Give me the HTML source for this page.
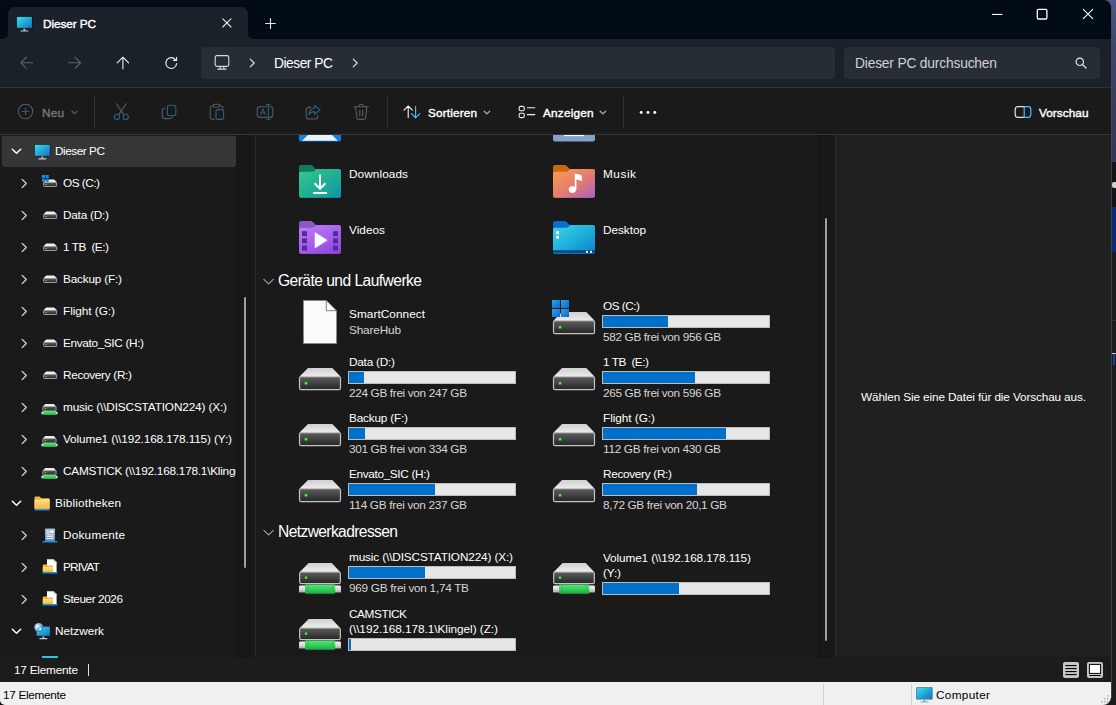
<!DOCTYPE html>
<html lang="de"><head><meta charset="utf-8"><title>Dieser PC</title>
<style>
html,body{margin:0;padding:0;}
body{width:1116px;height:705px;overflow:hidden;background:#0d0d0d;position:relative;font-family:"Liberation Sans", "DejaVu Sans", sans-serif;-webkit-font-smoothing:antialiased;}
.b{position:absolute;display:block;box-sizing:border-box;}
.t{position:absolute;white-space:pre;line-height:20px;height:20px;display:block;}
</style></head>
<body>
<div class="b " style="left:1100px;top:0px;width:16px;height:162px;background:linear-gradient(180deg,#4c5888 0%,#3e4670 28%,#383d65 60%,#33355a 100%);"></div>
<div class="b " style="left:1100px;top:162px;width:16px;height:45px;background:#141414;"></div>
<div class="b " style="left:1112px;top:182px;width:4px;height:6px;background:#d0d0d0;border-radius:2px 0 0 2px"></div>
<div class="b " style="left:1100px;top:207px;width:16px;height:45px;background:#0a2a74;"></div>
<div class="b " style="left:1100px;top:252px;width:16px;height:453px;background:#1c1c1c;"></div>
<div class="b " style="left:1100px;top:320px;width:16px;height:1px;background:#303030;"></div>
<div class="b " style="left:1112px;top:353px;width:4px;height:1px;background:#c8c8d8;"></div>
<div class="b " style="left:1113px;top:354px;width:2px;height:11px;background:#1c3aa0;"></div>
<div class="b" style="left:0;top:0;width:1111px;height:705px;background:#191919;border-radius:6px 8px 8px 5px;overflow:hidden">
<svg class="b" width="0" height="0" style="left:0;top:0"><defs>
<linearGradient id="scr" x1="0" y1="0" x2="1" y2="1"><stop offset="0" stop-color="#3fe0e8"/><stop offset="0.5" stop-color="#22a8d8"/><stop offset="1" stop-color="#1273c4"/></linearGradient>
<linearGradient id="dface" x1="0" y1="0" x2="0" y2="1"><stop offset="0" stop-color="#5e5e5e"/><stop offset="1" stop-color="#262626"/></linearGradient>
<linearGradient id="dtop" x1="0" y1="0" x2="0" y2="1"><stop offset="0" stop-color="#cfcfcf"/><stop offset="1" stop-color="#ececec"/></linearGradient>
<linearGradient id="pipe" x1="0" y1="0" x2="0" y2="1"><stop offset="0" stop-color="#f2f2f2"/><stop offset="0.5" stop-color="#d8d8d8"/><stop offset="1" stop-color="#a8a8a8"/></linearGradient>
<linearGradient id="grn" x1="0" y1="0" x2="0" y2="1"><stop offset="0" stop-color="#5ae67c"/><stop offset="0.5" stop-color="#34d05a"/><stop offset="1" stop-color="#1cac40"/></linearGradient>
<linearGradient id="win" x1="0" y1="0" x2="1" y2="1"><stop offset="0" stop-color="#2aa4ea"/><stop offset="1" stop-color="#0a68c8"/></linearGradient>
<linearGradient id="fdl" x1="0" y1="0" x2="1" y2="1"><stop offset="0" stop-color="#34c98c"/><stop offset="0.55" stop-color="#1fae94"/><stop offset="1" stop-color="#0f95a8"/></linearGradient>
<linearGradient id="fvid" x1="0.2" y1="0" x2="0.8" y2="1"><stop offset="0" stop-color="#ba7cf6"/><stop offset="1" stop-color="#9246e0"/></linearGradient>
<linearGradient id="fmus" x1="0" y1="0" x2="1" y2="1"><stop offset="0" stop-color="#fb9c4c"/><stop offset="0.55" stop-color="#e27c72"/><stop offset="1" stop-color="#a860c8"/></linearGradient>
<linearGradient id="fdesk" x1="0" y1="0" x2="1" y2="1"><stop offset="0" stop-color="#3cd8e4"/><stop offset="0.5" stop-color="#1fb0dc"/><stop offset="1" stop-color="#0f80cc"/></linearGradient>
<linearGradient id="fyel" x1="0" y1="0" x2="0" y2="1"><stop offset="0" stop-color="#ffe08a"/><stop offset="1" stop-color="#f6b73c"/></linearGradient>
<linearGradient id="doc" x1="0" y1="0" x2="0" y2="1"><stop offset="0" stop-color="#a8bedc"/><stop offset="1" stop-color="#6f8cb8"/></linearGradient>
<radialGradient id="globe" cx="0.35" cy="0.35" r="0.7"><stop offset="0" stop-color="#d4eaf8"/><stop offset="0.6" stop-color="#6aaedc"/><stop offset="1" stop-color="#2c6eac"/></radialGradient>
<radialGradient id="led" cx="0.5" cy="0.5" r="0.5"><stop offset="0" stop-color="#9dff6a"/><stop offset="0.6" stop-color="#35d82a"/><stop offset="1" stop-color="#1f9a1c"/></radialGradient>
</defs></svg>
<div class="b " style="left:0px;top:0px;width:1111px;height:39px;background:#010c17;"></div>
<div class="b " style="left:0px;top:39px;width:1111px;height:48px;background:#1a2129;"></div>
<div class="b " style="left:0px;top:87px;width:1111px;height:1px;background:#343434;"></div>
<div class="b " style="left:8px;top:7px;width:240px;height:33px;background:#1a2129;border-radius:7px 7px 0 0"></div>
<svg class="b" style="left:3px;top:34px" width="5" height="5" viewBox="0 0 5 5"><path d="M5 0V5H0A5 5 0 0 0 5 0Z" fill="#1a2129"/></svg>
<svg class="b" style="left:248px;top:34px" width="5" height="5" viewBox="0 0 5 5"><path d="M0 0V5H5A5 5 0 0 1 0 0Z" fill="#1a2129"/></svg>
<svg class="b" style="left:16.4px;top:15.5px;" width="17" height="16" viewBox="0 0 17 16" preserveAspectRatio="none"><rect x="0.2" y="0.2" width="16.4" height="12.4" rx="0.8" fill="#12161b"/><rect x="0.9" y="0.9" width="15" height="11" fill="url(#scr)"/><rect x="7.4" y="12.6" width="2" height="2.2" fill="#aeb6bf"/><rect x="4.4" y="14.4" width="8" height="1.1" rx="0.4" fill="#c4cad2"/></svg>
<svg class="b" style="left:992px;top:13px;" width="11" height="3" viewBox="0 0 11 3" preserveAspectRatio="none"><rect x="0" y="0.9" width="10.4" height="1.1" fill="#fff"/></svg>
<svg class="b" style="left:1036px;top:8px;" width="12" height="12" viewBox="0 0 12 12" preserveAspectRatio="none"><rect x="1.3" y="1.4" width="9.6" height="9.6" rx="1.2" fill="none" stroke="#fff" stroke-width="1.3"/></svg>
<svg class="b" style="left:1082px;top:8px;" width="12" height="12" viewBox="0 0 12 12" preserveAspectRatio="none"><path d="M1.3 1.3L10.7 10.7M10.7 1.3L1.3 10.7" fill="none" stroke="#fff" stroke-width="1.1" stroke-linecap="round" stroke-linejoin="round" /></svg>
<svg class="b" style="left:222px;top:18px;" width="10" height="10" viewBox="0 0 10 10" preserveAspectRatio="none"><path d="M0.8 0.8L9 9M9 0.8L0.8 9" fill="none" stroke="#e8e8e8" stroke-width="1.1" stroke-linecap="round" stroke-linejoin="round" /></svg>
<svg class="b" style="left:265px;top:18px;" width="11" height="11" viewBox="0 0 11 11" preserveAspectRatio="none"><path d="M5.5 0.6V10.4M0.6 5.5H10.4" fill="none" stroke="#e8e8e8" stroke-width="1.1" stroke-linecap="round" stroke-linejoin="round" /></svg>
<span class="t" style="left:43px;top:14px;font-size:11.8px;color:#fff;-webkit-text-stroke:0.4px currentColor;letter-spacing:-0.096px;">Dieser PC</span>
<div class="b " style="left:201px;top:47px;width:634px;height:32px;background:#272d35;border-radius:4px"></div>
<div class="b " style="left:844px;top:47px;width:256px;height:32px;background:#272d35;border-radius:4px"></div>
<svg class="b" style="left:20px;top:56px;" width="14" height="14" viewBox="0 0 14 14" preserveAspectRatio="none"><path d="M0.8 6.8H12.6M6.4 1.2L0.8 6.8L6.4 12.4" fill="none" stroke="#5f646b" stroke-width="1.1" stroke-linecap="round" stroke-linejoin="round" /></svg>
<svg class="b" style="left:68px;top:56px;" width="14" height="14" viewBox="0 0 14 14" preserveAspectRatio="none"><path d="M0.8 6.8H12.6M7 1.2L12.6 6.8L7 12.4" fill="none" stroke="#5f646b" stroke-width="1.1" stroke-linecap="round" stroke-linejoin="round" /></svg>
<svg class="b" style="left:116px;top:56px;" width="14" height="14" viewBox="0 0 14 14" preserveAspectRatio="none"><path d="M6.9 1.2V12.8M1.2 6.9L6.9 1.2L12.6 6.9" fill="none" stroke="#f2f2f2" stroke-width="1.1" stroke-linecap="round" stroke-linejoin="round" /></svg>
<svg class="b" style="left:164px;top:56px;" width="15" height="14" viewBox="0 0 15 14" preserveAspectRatio="none"><path d="M11.4 3.6A5.4 5.4 0 1 0 12.6 7.6M12.6 1.4V4.4H9.6" fill="none" stroke="#f2f2f2" stroke-width="1.1" stroke-linecap="round" stroke-linejoin="round" /></svg>
<svg class="b" style="left:214px;top:54px;" width="16" height="17" viewBox="0 0 16 17" preserveAspectRatio="none"><rect x="1.2" y="1.6" width="13.6" height="10.8" rx="1.8" fill="none" stroke="#dadada" stroke-width="1.1"/><path d="M6.2 12.6V14.6M9.8 12.6V14.6M3.8 15.1H12.2" fill="none" stroke="#dadada" stroke-width="1.1" stroke-linecap="round"/></svg>
<svg class="b" style="left:249px;top:58px;" width="7" height="10" viewBox="0 0 7 10" preserveAspectRatio="none"><path d="M1.2 1.2L5.2 5L1.2 8.8" fill="none" stroke="#e6e6e6" stroke-width="1.1" stroke-linecap="round" stroke-linejoin="round" /></svg>
<svg class="b" style="left:352px;top:58px;" width="7" height="10" viewBox="0 0 7 10" preserveAspectRatio="none"><path d="M1.2 1.2L5.2 5L1.2 8.8" fill="none" stroke="#e6e6e6" stroke-width="1.1" stroke-linecap="round" stroke-linejoin="round" /></svg>
<svg class="b" style="left:1075px;top:57px;" width="12" height="12" viewBox="0 0 12 12" preserveAspectRatio="none"><circle cx="4.8" cy="4.8" r="3.7" fill="none" stroke="#e8e8e8" stroke-width="1.2"/><path d="M7.6 7.6L11 11" fill="none" stroke="#e8e8e8" stroke-width="1.3" stroke-linecap="round" stroke-linejoin="round" /></svg>
<span class="t" style="left:274px;top:53.5px;font-size:13.8px;color:#fff;letter-spacing:-0.484px;">Dieser PC</span>
<span class="t" style="left:855px;top:54px;font-size:13.8px;color:#d2d2d2;letter-spacing:-0.185px;">Dieser PC durchsuchen</span>
<div class="b " style="left:0px;top:88px;width:1111px;height:46px;background:#1a1a1a;"></div>
<div class="b " style="left:0px;top:134px;width:1111px;height:1px;background:#353535;"></div>
<div class="b " style="left:94px;top:96px;width:1px;height:32px;background:#333;"></div>
<div class="b " style="left:387px;top:96px;width:1px;height:32px;background:#333;"></div>
<div class="b " style="left:623px;top:96px;width:1px;height:32px;background:#333;"></div>
<svg class="b" style="left:17px;top:103px;" width="17" height="17" viewBox="0 0 17 17" preserveAspectRatio="none"><circle cx="8.5" cy="8.5" r="7.2" fill="none" stroke="#5a5a5a" stroke-width="1.1"/><path d="M8.5 5.3V11.7M5.3 8.5H11.7" fill="none" stroke="#2a5f82" stroke-width="1.2" stroke-linecap="round" stroke-linejoin="round" /></svg>
<svg class="b" style="left:71px;top:109.5px;" width="7" height="6" viewBox="0 0 7 6" preserveAspectRatio="none"><path d="M1 1.3L3.5 3.8L6 1.3" fill="none" stroke="#5a5a5a" stroke-width="1.3" stroke-linecap="round" stroke-linejoin="round" /></svg>
<svg class="b" style="left:113px;top:103px;" width="17" height="18" viewBox="0 0 17 18" preserveAspectRatio="none"><path d="M3.4 0.8L10.8 11.6M13.2 0.8L5.8 11.6" fill="none" stroke="#5a5a5a" stroke-width="1.1" stroke-linecap="round" stroke-linejoin="round" /><circle cx="3.9" cy="13.9" r="2.6" fill="none" stroke="#2a5f82" stroke-width="1.1"/><circle cx="12.7" cy="13.9" r="2.6" fill="none" stroke="#2a5f82" stroke-width="1.1"/></svg>
<svg class="b" style="left:161px;top:104px;" width="17" height="16" viewBox="0 0 17 16" preserveAspectRatio="none"><rect x="6.4" y="1.2" width="8.4" height="10.4" rx="2.2" fill="none" stroke="#2a5f82" stroke-width="1.1"/><path d="M3.6 4.2Q1.2 4.4 1.2 6.8V12Q1.2 14.6 3.8 14.6H8.6Q10.6 14.6 11 13.2" fill="none" stroke="#5a5a5a" stroke-width="1.1" stroke-linecap="round" stroke-linejoin="round" /></svg>
<svg class="b" style="left:209px;top:103px;" width="17" height="18" viewBox="0 0 17 18" preserveAspectRatio="none"><path d="M4.2 3H2.8Q1.2 3 1.2 4.6V14.6Q1.2 16.2 2.8 16.2H5.6M10.8 3H12.2Q13.8 3 13.8 4.6V5.6" fill="none" stroke="#5a5a5a" stroke-width="1.1" stroke-linecap="round" stroke-linejoin="round" /><rect x="4.2" y="1.2" width="6.6" height="3" rx="1.4" fill="none" stroke="#5a5a5a" stroke-width="1.1"/><rect x="7" y="6.6" width="7.6" height="9.8" rx="1.6" fill="none" stroke="#2a5f82" stroke-width="1.1"/></svg>
<svg class="b" style="left:256px;top:102.8px;" width="18" height="19" viewBox="0 0 18 19" preserveAspectRatio="none"><path d="M11 3.8H4Q1.2 3.8 1.2 6.6V11.6Q1.2 14.4 4 14.4H11M13.6 3.8H14.2Q16.8 3.8 16.8 6.6V11.6Q16.8 14.4 14.2 14.4H13.6" fill="none" stroke="#5a5a5a" stroke-width="1.1" stroke-linecap="round" stroke-linejoin="round" /><path d="M10.5 1.6H14.1M12.3 1.6V16.2M10.5 16.2H14.1" fill="none" stroke="#2a5f82" stroke-width="1.1" stroke-linecap="round" stroke-linejoin="round" /><path d="M4.4 11.8L6.9 5.8L9.4 11.8M5.2 9.9H8.6" fill="none" stroke="#2a5f82" stroke-width="1.0" stroke-linecap="round" stroke-linejoin="round" /></svg>
<svg class="b" style="left:305px;top:103.7px;" width="17" height="17" viewBox="0 0 17 17" preserveAspectRatio="none"><path d="M5.6 3.4H4Q1.2 3.4 1.2 6.2V12.2Q1.2 15 4 15H10Q12.8 15 12.8 12.2V11.6" fill="none" stroke="#5a5a5a" stroke-width="1.1" stroke-linecap="round" stroke-linejoin="round" /><path d="M9.6 1.4L15 5.8L9.6 10.2V7.6Q5.8 7.4 4 10.6Q4.4 4.6 9.6 4Z" fill="none" stroke="#2a5f82" stroke-width="1.1" stroke-linejoin="round"/></svg>
<svg class="b" style="left:353px;top:103px;" width="17" height="18" viewBox="0 0 17 18" preserveAspectRatio="none"><path d="M1 3.8H15.4M6 3.6Q6 1.2 8.2 1.2Q10.4 1.2 10.4 3.6M2.6 4L3.8 14.6Q4 16.4 5.8 16.4H10.6Q12.4 16.4 12.6 14.6L13.8 4" fill="none" stroke="#5a5a5a" stroke-width="1.1" stroke-linecap="round" stroke-linejoin="round" /><path d="M6.8 7.2V13M9.6 7.2V13" fill="none" stroke="#5a5a5a" stroke-width="1.1" stroke-linecap="round" stroke-linejoin="round" /></svg>
<svg class="b" style="left:403px;top:105px;" width="18" height="14" viewBox="0 0 18 14" preserveAspectRatio="none"><path d="M5.2 1V12.4M1 5.2L5.2 1L9.4 5.2" fill="none" stroke="#f0f0f0" stroke-width="1.1" stroke-linecap="round" stroke-linejoin="round" /><path d="M12.6 1.2V12.8M8.4 8.6L12.6 12.8L16.8 8.6" fill="none" stroke="#4cc2ff" stroke-width="1.1" stroke-linecap="round" stroke-linejoin="round" /></svg>
<svg class="b" style="left:483px;top:109.5px;" width="8" height="6" viewBox="0 0 8 6" preserveAspectRatio="none"><path d="M1.2 1.3L3.9 3.9L6.6 1.3" fill="none" stroke="#b0b0b0" stroke-width="1.3" stroke-linecap="round" stroke-linejoin="round" /></svg>
<svg class="b" style="left:518px;top:105px;" width="18" height="14" viewBox="0 0 18 14" preserveAspectRatio="none"><rect x="1.1" y="1.4" width="5.2" height="4.4" rx="1.6" fill="none" stroke="#f0f0f0" stroke-width="1.1"/><rect x="1.1" y="8.2" width="5.2" height="4.4" rx="1.6" fill="none" stroke="#f0f0f0" stroke-width="1.1"/><path d="M9.4 2.8H16.8M9.4 9.6H16.8" fill="none" stroke="#f0f0f0" stroke-width="1.1" stroke-linecap="round" stroke-linejoin="round" /></svg>
<svg class="b" style="left:599px;top:109.5px;" width="8" height="6" viewBox="0 0 8 6" preserveAspectRatio="none"><path d="M1.2 1.3L3.9 3.9L6.6 1.3" fill="none" stroke="#b0b0b0" stroke-width="1.3" stroke-linecap="round" stroke-linejoin="round" /></svg>
<svg class="b" style="left:639px;top:110px;" width="18" height="5" viewBox="0 0 18 5" preserveAspectRatio="none"><circle cx="2.2" cy="2.5" r="1.45" fill="#fff"/><circle cx="9" cy="2.5" r="1.45" fill="#fff"/><circle cx="15.8" cy="2.5" r="1.45" fill="#fff"/></svg>
<svg class="b" style="left:1014px;top:105px;" width="18" height="14" viewBox="0 0 18 14" preserveAspectRatio="none"><path d="M10.2 1.7H4Q1.2 1.7 1.2 4.5V9.6Q1.2 12.4 4 12.4H10.2" fill="none" stroke="#e4e4e4" stroke-width="1.2" stroke-linecap="round" stroke-linejoin="round" /><path d="M10.2 1.7H14Q16.8 1.7 16.8 4.5V9.6Q16.8 12.4 14 12.4H10.2Z" fill="none" stroke="#4cc2ff" stroke-width="1.2" stroke-linecap="round" stroke-linejoin="round" /></svg>
<span class="t" style="left:42px;top:102.5px;font-size:11.8px;color:#787878;-webkit-text-stroke:0.4px currentColor;letter-spacing:0.172px;">Neu</span>
<span class="t" style="left:428px;top:102.5px;font-size:11.8px;color:#fff;-webkit-text-stroke:0.4px currentColor;letter-spacing:0.141px;">Sortieren</span>
<span class="t" style="left:543px;top:102.5px;font-size:11.8px;color:#fff;-webkit-text-stroke:0.4px currentColor;letter-spacing:0.185px;">Anzeigen</span>
<span class="t" style="left:1039px;top:102.5px;font-size:11.8px;color:#fff;-webkit-text-stroke:0.4px currentColor;letter-spacing:0.045px;">Vorschau</span>
<div class="b " style="left:0px;top:135px;width:255px;height:523px;background:#171717;"></div>
<div class="b " style="left:0px;top:135px;width:236px;height:523px;background:#1a1a1a;"></div>
<div class="b " style="left:2px;top:136px;width:234px;height:31px;background:#363636;border-radius:0 0 3px 3px"></div>
<div class="b " style="left:255px;top:135px;width:1px;height:522px;background:#2b2b2b;"></div>
<div class="b " style="left:42px;top:656px;width:16px;height:2px;background:#2fc4de;"></div>
<div class="b " style="left:244px;top:297px;width:2px;height:271px;background:#9f9f9f;border-radius:1px"></div>
<svg class="b" style="left:11px;top:147.5px;" width="11" height="7" viewBox="0 0 11 7" preserveAspectRatio="none"><path d="M1.3 1.2L5.5 5.3L9.7 1.2" fill="none" stroke="#fff" stroke-width="1.5" stroke-linecap="round" stroke-linejoin="round"/></svg>
<svg class="b" style="left:33.7px;top:143.6px;" width="17" height="16" viewBox="0 0 17 16" preserveAspectRatio="none"><rect x="0.2" y="0.2" width="16.2" height="12.3" rx="0.8" fill="#15181c"/><rect x="0.8" y="0.8" width="15" height="11.1" fill="url(#scr)"/><rect x="7.4" y="12.5" width="1.9" height="2.1" fill="#aeb6bf"/><rect x="4.4" y="14.3" width="7.9" height="1.1" rx="0.4" fill="#c4cad2"/></svg>
<span class="t" style="left:55px;top:140.5px;font-size:11.8px;color:#fff;letter-spacing:-0.471px;">Dieser PC</span>
<svg class="b" style="left:21px;top:178.0px;" width="7" height="11" viewBox="0 0 7 11" preserveAspectRatio="none"><path d="M1.2 1.5L5.3 5.5L1.2 9.5" fill="none" stroke="#c8c8c8" stroke-width="1.4" stroke-linecap="round" stroke-linejoin="round"/></svg>
<svg class="b" style="left:42.3px;top:172.2px;overflow:visible;" width="16" height="16" viewBox="0 0 16 16" preserveAspectRatio="none"><path d="M4.2 7.6H12.2L14.8 10.3H1.5Z" fill="#efefef"/><rect x="1.6" y="10.3" width="13.1" height="4.2" rx="0.8" fill="url(#dface)" stroke="#d4d4d4" stroke-width="0.7"/><circle cx="4.2" cy="12.4" r="0.75" fill="#49e83a"/><rect x="-0.1" y="3" width="3.1" height="3.1" fill="#1b8fe4"/><rect x="3.6" y="3" width="3.1" height="3.1" fill="#1b8fe4"/><rect x="-0.1" y="6.7" width="3.1" height="3.1" fill="#1382dc"/><rect x="3.6" y="6.7" width="3.1" height="3.1" fill="#1382dc"/></svg>
<span class="t" style="left:63px;top:172.5px;font-size:11.8px;color:#fff;letter-spacing:-0.497px;">OS (C:)</span>
<svg class="b" style="left:21px;top:210.0px;" width="7" height="11" viewBox="0 0 7 11" preserveAspectRatio="none"><path d="M1.2 1.5L5.3 5.5L1.2 9.5" fill="none" stroke="#c8c8c8" stroke-width="1.4" stroke-linecap="round" stroke-linejoin="round"/></svg>
<svg class="b" style="left:42.3px;top:204.2px;overflow:visible;" width="16" height="16" viewBox="0 0 16 16" preserveAspectRatio="none"><path d="M4.2 7.6H12.2L14.8 10.3H1.5Z" fill="#efefef"/><rect x="1.6" y="10.3" width="13.1" height="4.2" rx="0.8" fill="url(#dface)" stroke="#d4d4d4" stroke-width="0.7"/><circle cx="4.2" cy="12.4" r="0.75" fill="#49e83a"/></svg>
<span class="t" style="left:63px;top:204.5px;font-size:11.8px;color:#fff;letter-spacing:-0.232px;">Data (D:)</span>
<svg class="b" style="left:21px;top:242.0px;" width="7" height="11" viewBox="0 0 7 11" preserveAspectRatio="none"><path d="M1.2 1.5L5.3 5.5L1.2 9.5" fill="none" stroke="#c8c8c8" stroke-width="1.4" stroke-linecap="round" stroke-linejoin="round"/></svg>
<svg class="b" style="left:42.3px;top:236.2px;overflow:visible;" width="16" height="16" viewBox="0 0 16 16" preserveAspectRatio="none"><path d="M4.2 7.6H12.2L14.8 10.3H1.5Z" fill="#efefef"/><rect x="1.6" y="10.3" width="13.1" height="4.2" rx="0.8" fill="url(#dface)" stroke="#d4d4d4" stroke-width="0.7"/><circle cx="4.2" cy="12.4" r="0.75" fill="#49e83a"/></svg>
<span class="t" style="left:63px;top:236.5px;font-size:11.8px;color:#fff;letter-spacing:-0.474px;">1 TB  (E:)</span>
<svg class="b" style="left:21px;top:274.0px;" width="7" height="11" viewBox="0 0 7 11" preserveAspectRatio="none"><path d="M1.2 1.5L5.3 5.5L1.2 9.5" fill="none" stroke="#c8c8c8" stroke-width="1.4" stroke-linecap="round" stroke-linejoin="round"/></svg>
<svg class="b" style="left:42.3px;top:268.2px;overflow:visible;" width="16" height="16" viewBox="0 0 16 16" preserveAspectRatio="none"><path d="M4.2 7.6H12.2L14.8 10.3H1.5Z" fill="#efefef"/><rect x="1.6" y="10.3" width="13.1" height="4.2" rx="0.8" fill="url(#dface)" stroke="#d4d4d4" stroke-width="0.7"/><circle cx="4.2" cy="12.4" r="0.75" fill="#49e83a"/></svg>
<span class="t" style="left:63px;top:268.5px;font-size:11.8px;color:#fff;letter-spacing:-0.197px;">Backup (F:)</span>
<svg class="b" style="left:21px;top:306.0px;" width="7" height="11" viewBox="0 0 7 11" preserveAspectRatio="none"><path d="M1.2 1.5L5.3 5.5L1.2 9.5" fill="none" stroke="#c8c8c8" stroke-width="1.4" stroke-linecap="round" stroke-linejoin="round"/></svg>
<svg class="b" style="left:42.3px;top:300.2px;overflow:visible;" width="16" height="16" viewBox="0 0 16 16" preserveAspectRatio="none"><path d="M4.2 7.6H12.2L14.8 10.3H1.5Z" fill="#efefef"/><rect x="1.6" y="10.3" width="13.1" height="4.2" rx="0.8" fill="url(#dface)" stroke="#d4d4d4" stroke-width="0.7"/><circle cx="4.2" cy="12.4" r="0.75" fill="#49e83a"/></svg>
<span class="t" style="left:63px;top:300.5px;font-size:11.8px;color:#fff;letter-spacing:-0.044px;">Flight (G:)</span>
<svg class="b" style="left:21px;top:338.0px;" width="7" height="11" viewBox="0 0 7 11" preserveAspectRatio="none"><path d="M1.2 1.5L5.3 5.5L1.2 9.5" fill="none" stroke="#c8c8c8" stroke-width="1.4" stroke-linecap="round" stroke-linejoin="round"/></svg>
<svg class="b" style="left:42.3px;top:332.2px;overflow:visible;" width="16" height="16" viewBox="0 0 16 16" preserveAspectRatio="none"><path d="M4.2 7.6H12.2L14.8 10.3H1.5Z" fill="#efefef"/><rect x="1.6" y="10.3" width="13.1" height="4.2" rx="0.8" fill="url(#dface)" stroke="#d4d4d4" stroke-width="0.7"/><circle cx="4.2" cy="12.4" r="0.75" fill="#49e83a"/></svg>
<span class="t" style="left:63px;top:332.5px;font-size:11.8px;color:#fff;letter-spacing:-0.349px;">Envato_SIC (H:)</span>
<svg class="b" style="left:21px;top:370.0px;" width="7" height="11" viewBox="0 0 7 11" preserveAspectRatio="none"><path d="M1.2 1.5L5.3 5.5L1.2 9.5" fill="none" stroke="#c8c8c8" stroke-width="1.4" stroke-linecap="round" stroke-linejoin="round"/></svg>
<svg class="b" style="left:42.3px;top:364.2px;overflow:visible;" width="16" height="16" viewBox="0 0 16 16" preserveAspectRatio="none"><path d="M4.2 7.6H12.2L14.8 10.3H1.5Z" fill="#efefef"/><rect x="1.6" y="10.3" width="13.1" height="4.2" rx="0.8" fill="url(#dface)" stroke="#d4d4d4" stroke-width="0.7"/><circle cx="4.2" cy="12.4" r="0.75" fill="#49e83a"/></svg>
<span class="t" style="left:63px;top:364.5px;font-size:11.8px;color:#fff;letter-spacing:-0.314px;">Recovery (R:)</span>
<svg class="b" style="left:21px;top:402.0px;" width="7" height="11" viewBox="0 0 7 11" preserveAspectRatio="none"><path d="M1.2 1.5L5.3 5.5L1.2 9.5" fill="none" stroke="#c8c8c8" stroke-width="1.4" stroke-linecap="round" stroke-linejoin="round"/></svg>
<svg class="b" style="left:42.1px;top:401.8px;overflow:visible;" width="16" height="16" viewBox="0 0 16 16" preserveAspectRatio="none"><path d="M3.2 1.9H11.8L14 4.4H1Z" fill="#ececec"/><rect x="0.9" y="4.4" width="13.2" height="4.5" rx="0.7" fill="url(#dface)" stroke="#d0d0d0" stroke-width="0.7"/><circle cx="3.5" cy="6.5" r="0.75" fill="#49e83a"/><rect x="-0.5" y="9.7" width="16" height="2.9" rx="0.6" fill="url(#pipe)"/><rect x="1.4" y="9.1" width="12.4" height="3.9" rx="0.5" fill="url(#grn)"/></svg>
<span class="t" style="left:63px;top:396.5px;font-size:11.8px;color:#fff;letter-spacing:-0.143px;">music (\\DISCSTATION224) (X:)</span>
<svg class="b" style="left:21px;top:434.0px;" width="7" height="11" viewBox="0 0 7 11" preserveAspectRatio="none"><path d="M1.2 1.5L5.3 5.5L1.2 9.5" fill="none" stroke="#c8c8c8" stroke-width="1.4" stroke-linecap="round" stroke-linejoin="round"/></svg>
<svg class="b" style="left:42.1px;top:433.8px;overflow:visible;" width="16" height="16" viewBox="0 0 16 16" preserveAspectRatio="none"><path d="M3.2 1.9H11.8L14 4.4H1Z" fill="#ececec"/><rect x="0.9" y="4.4" width="13.2" height="4.5" rx="0.7" fill="url(#dface)" stroke="#d0d0d0" stroke-width="0.7"/><circle cx="3.5" cy="6.5" r="0.75" fill="#49e83a"/><rect x="-0.5" y="9.7" width="16" height="2.9" rx="0.6" fill="url(#pipe)"/><rect x="1.4" y="9.1" width="12.4" height="3.9" rx="0.5" fill="url(#grn)"/></svg>
<span class="t" style="left:63px;top:428.5px;font-size:11.8px;color:#fff;letter-spacing:-0.127px;">Volume1 (\\192.168.178.115) (Y:)</span>
<svg class="b" style="left:21px;top:466.0px;" width="7" height="11" viewBox="0 0 7 11" preserveAspectRatio="none"><path d="M1.2 1.5L5.3 5.5L1.2 9.5" fill="none" stroke="#c8c8c8" stroke-width="1.4" stroke-linecap="round" stroke-linejoin="round"/></svg>
<svg class="b" style="left:42.1px;top:465.8px;overflow:visible;" width="16" height="16" viewBox="0 0 16 16" preserveAspectRatio="none"><path d="M3.2 1.9H11.8L14 4.4H1Z" fill="#ececec"/><rect x="0.9" y="4.4" width="13.2" height="4.5" rx="0.7" fill="url(#dface)" stroke="#d0d0d0" stroke-width="0.7"/><circle cx="3.5" cy="6.5" r="0.75" fill="#49e83a"/><rect x="-0.5" y="9.7" width="16" height="2.9" rx="0.6" fill="url(#pipe)"/><rect x="1.4" y="9.1" width="12.4" height="3.9" rx="0.5" fill="url(#grn)"/></svg>
<span class="t" style="left:63px;top:460.5px;font-size:11.8px;color:#fff;letter-spacing:-0.239px;width:173px;overflow:hidden;">CAMSTICK (\\192.168.178.1\Klingel) (Z:)</span>
<svg class="b" style="left:11px;top:499.5px;" width="11" height="7" viewBox="0 0 11 7" preserveAspectRatio="none"><path d="M1.3 1.2L5.5 5.3L9.7 1.2" fill="none" stroke="#fff" stroke-width="1.5" stroke-linecap="round" stroke-linejoin="round"/></svg>
<svg class="b" style="left:34px;top:495.9px;" width="16" height="16" viewBox="0 0 16 16" preserveAspectRatio="none"><path d="M0.5 1.6Q0.5 0.6 1.5 0.6H5.6L7.4 2.2H14.6Q15.6 2.2 15.6 3.2V12.6H0.5Z" fill="#f2b63c"/><path d="M0.5 4.6Q0.5 3.8 1.3 3.8H6.2L7.8 2.9H14.8Q15.6 2.9 15.6 3.7V13H0.5Z" fill="url(#fyel)"/><path d="M1.2 12.9H14.9L16 14.6H0Z" fill="#1a8fe8"/></svg>
<span class="t" style="left:55px;top:492.5px;font-size:11.8px;color:#fff;letter-spacing:0.156px;">Bibliotheken</span>
<svg class="b" style="left:21px;top:530.0px;" width="7" height="11" viewBox="0 0 7 11" preserveAspectRatio="none"><path d="M1.2 1.5L5.3 5.5L1.2 9.5" fill="none" stroke="#c8c8c8" stroke-width="1.4" stroke-linecap="round" stroke-linejoin="round"/></svg>
<svg class="b" style="left:42px;top:528.0px;" width="16" height="16" viewBox="0 0 16 16" preserveAspectRatio="none"><rect x="3" y="0.4" width="10" height="12.6" rx="0.8" fill="url(#doc)"/><rect x="4.6" y="2.6" width="3" height="0.9" fill="#fff"/><rect x="8.4" y="2.4" width="3" height="2.6" fill="#fff"/><rect x="4.6" y="4.4" width="3" height="0.9" fill="#fff"/><rect x="4.6" y="6.4" width="6.8" height="0.9" fill="#fff"/><rect x="4.6" y="8.2" width="6.8" height="0.9" fill="#fff"/><rect x="4.6" y="10" width="6.8" height="0.9" fill="#fff"/><path d="M1.2 12.9H14.9L16 14.6H0Z" fill="#1a8fe8"/></svg>
<span class="t" style="left:63px;top:524.5px;font-size:11.8px;color:#fff;letter-spacing:0.209px;">Dokumente</span>
<svg class="b" style="left:21px;top:562.0px;" width="7" height="11" viewBox="0 0 7 11" preserveAspectRatio="none"><path d="M1.2 1.5L5.3 5.5L1.2 9.5" fill="none" stroke="#c8c8c8" stroke-width="1.4" stroke-linecap="round" stroke-linejoin="round"/></svg>
<svg class="b" style="left:42px;top:558.9px;" width="16" height="16" viewBox="0 0 16 16" preserveAspectRatio="none"><path d="M5 0.2H11.6L14.6 3.2V13H5Z" fill="#fff"/><path d="M11.6 0.2V3.2H14.6Z" fill="#c8c8c8"/><path d="M0.8 6.4Q0.8 5.6 1.6 5.6H5L6 6.6H10.2Q11 6.6 11 7.4V13H0.8Z" fill="#f4b53a"/><path d="M0.8 8H11V13H0.8Z" fill="url(#fyel)"/><path d="M1.2 12.9H14.9L16 14.6H0Z" fill="#1a8fe8"/></svg>
<span class="t" style="left:63px;top:556.5px;font-size:11.8px;color:#fff;letter-spacing:-0.772px;">PRIVAT</span>
<svg class="b" style="left:21px;top:594.0px;" width="7" height="11" viewBox="0 0 7 11" preserveAspectRatio="none"><path d="M1.2 1.5L5.3 5.5L1.2 9.5" fill="none" stroke="#c8c8c8" stroke-width="1.4" stroke-linecap="round" stroke-linejoin="round"/></svg>
<svg class="b" style="left:42px;top:590.9px;" width="16" height="16" viewBox="0 0 16 16" preserveAspectRatio="none"><path d="M5 0.2H11.6L14.6 3.2V13H5Z" fill="#fff"/><path d="M11.6 0.2V3.2H14.6Z" fill="#c8c8c8"/><path d="M0.8 6.4Q0.8 5.6 1.6 5.6H5L6 6.6H10.2Q11 6.6 11 7.4V13H0.8Z" fill="#f4b53a"/><path d="M0.8 8H11V13H0.8Z" fill="url(#fyel)"/><path d="M1.2 12.9H14.9L16 14.6H0Z" fill="#1a8fe8"/></svg>
<span class="t" style="left:63px;top:588.5px;font-size:11.8px;color:#fff;letter-spacing:-0.428px;">Steuer 2026</span>
<svg class="b" style="left:11px;top:627.5px;" width="11" height="7" viewBox="0 0 11 7" preserveAspectRatio="none"><path d="M1.3 1.2L5.5 5.3L9.7 1.2" fill="none" stroke="#fff" stroke-width="1.5" stroke-linecap="round" stroke-linejoin="round"/></svg>
<svg class="b" style="left:33.6px;top:622.8px;" width="17" height="17" viewBox="0 0 17 17" preserveAspectRatio="none"><rect x="2.1" y="3.1" width="14.3" height="10.2" rx="0.6" fill="#15181c"/><rect x="2.6" y="3.6" width="13.3" height="9.2" fill="url(#scr)"/><rect x="8.5" y="13.3" width="1.8" height="2.1" fill="#aeb6bf"/><rect x="5.3" y="15.1" width="8.2" height="1.1" rx="0.4" fill="#c4cad2"/><circle cx="4.8" cy="4.5" r="4.5" fill="url(#globe)"/><path d="M2.2 2.6Q4 1.2 5.6 2.2Q5 3.6 3.6 3.8Q3.4 5.2 2 5.4Q1.2 4 2.2 2.6ZM5.4 5.2Q7 4.6 8 5.6Q7.4 7.6 5.8 8Q4.8 6.6 5.4 5.2Z" fill="#f0f8ff" opacity="0.8"/></svg>
<span class="t" style="left:55px;top:620.5px;font-size:11.8px;color:#fff;letter-spacing:-0.025px;">Netzwerk</span>
<div class="b " style="left:256px;top:135px;width:561px;height:523px;background:#1a1a1a;"></div>
<div class="b " style="left:817px;top:135px;width:19px;height:523px;background:#171717;"></div>
<div class="b " style="left:825px;top:218px;width:2px;height:423px;background:#9f9f9f;border-radius:1px"></div>
<svg class="b" style="left:299px;top:135px" width="42" height="7" viewBox="0 0 42 7"><path d="M0 0H42V4.6Q42 6.6 40 6.6H2Q0 6.6 0 4.6Z" fill="#0f6cc8"/><path d="M0 0H42V4.2Q42 5.8 40 5.8H2Q0 5.8 0 4.2Z" fill="#1a80da"/><path d="M9 0H33L38.8 5.8H3Z" fill="#eaf4ff"/></svg>
<svg class="b" style="left:553px;top:135px" width="42" height="7" viewBox="0 0 42 7"><path d="M0 0H42V4.6Q42 6.6 40 6.6H2Q0 6.6 0 4.6Z" fill="#83a3c8"/><rect x="11" y="0" width="20" height="1.1" fill="#fff"/></svg>
<svg class="b" style="left:299px;top:165px;overflow:visible;" width="42" height="32.7" viewBox="0 0 42 32" preserveAspectRatio="none"><path d="M0 2.2Q0 0 2.2 0H11.4Q12.8 0 13.8 1L16.8 3.8H39.8Q42 3.8 42 6V29.8Q42 32 39.8 32H2.2Q0 32 0 29.8Z" fill="#0e7c5c"/><path d="M0 8.2Q0 6.6 1.8 6.6H13Q14.2 6.6 15.2 5.8L17.4 3.8H39.8Q42 3.8 42 6V29.8Q42 32 39.8 32H2.2Q0 32 0 29.8Z" fill="url(#fdl)"/><path d="M21 9.2V23M15.6 17.8L21 23.2L26.4 17.8" fill="none" stroke="#fff" stroke-width="2" stroke-linecap="butt"/><rect x="14" y="26.4" width="14" height="1.9" fill="#fff"/></svg>
<svg class="b" style="left:299px;top:221px;overflow:visible;" width="42" height="32.7" viewBox="0 0 42 32" preserveAspectRatio="none"><path d="M0 2.2Q0 0 2.2 0H11.4Q12.8 0 13.8 1L16.8 3.8H39.8Q42 3.8 42 6V29.8Q42 32 39.8 32H2.2Q0 32 0 29.8Z" fill="#8a57c4"/><path d="M0 8.2Q0 6.6 1.8 6.6H13Q14.2 6.6 15.2 5.8L17.4 3.8H39.8Q42 3.8 42 6V29.8Q42 32 39.8 32H2.2Q0 32 0 29.8Z" fill="url(#fvid)"/><g fill="#562a9c"><rect x="3" y="10" width="5" height="4.8"/><rect x="3" y="17" width="5" height="4.8"/><rect x="3" y="24" width="5" height="4.8"/><rect x="34" y="10" width="5" height="4.8"/><rect x="34" y="17" width="5" height="4.8"/><rect x="34" y="24" width="5" height="4.8"/></g><path d="M16 11.2L28.2 18.8L16 26.4Z" fill="#fbf8ff" stroke="#fbf8ff" stroke-width="0.6" stroke-linejoin="round"/></svg>
<svg class="b" style="left:553px;top:165px;overflow:visible;" width="42" height="32.7" viewBox="0 0 42 32" preserveAspectRatio="none"><path d="M0 2.2Q0 0 2.2 0H11.4Q12.8 0 13.8 1L16.8 3.8H39.8Q42 3.8 42 6V29.8Q42 32 39.8 32H2.2Q0 32 0 29.8Z" fill="#c8680e"/><path d="M0 8.2Q0 6.6 1.8 6.6H13Q14.2 6.6 15.2 5.8L17.4 3.8H39.8Q42 3.8 42 6V29.8Q42 32 39.8 32H2.2Q0 32 0 29.8Z" fill="url(#fmus)"/><ellipse cx="19.4" cy="24" rx="3.6" ry="3.3" fill="#fff"/><path d="M21.8 24.4V8.6Q25.6 8.4 28.8 10.6V16Q25.6 14 23.4 14.2V24.4Z" fill="#fff"/></svg>
<svg class="b" style="left:553px;top:221px;overflow:visible;" width="42" height="32.7" viewBox="0 0 42 32" preserveAspectRatio="none"><path d="M0 2.2Q0 0 2.2 0H11.4Q12.8 0 13.8 1L16.8 3.8H39.8Q42 3.8 42 6V29.8Q42 32 39.8 32H2.2Q0 32 0 29.8Z" fill="#0b6cd0"/><path d="M0 8.2Q0 6.6 1.8 6.6H13Q14.2 6.6 15.2 5.8L17.4 3.8H39.8Q42 3.8 42 6V29.8Q42 32 39.8 32H2.2Q0 32 0 29.8Z" fill="url(#fdesk)"/><path d="M0 28.8H42V29.8Q42 32 39.8 32H2.2Q0 32 0 29.8Z" fill="#0f68bc"/><rect x="0" y="28.8" width="42" height="2" fill="#0b446e"/><rect x="3.2" y="10" width="2.8" height="2.8" fill="#fff"/><rect x="3.2" y="14.4" width="2.8" height="2.8" fill="#fff"/><rect x="33" y="29.2" width="2" height="1.9" fill="#f4f4f4"/><rect x="37" y="29.2" width="2" height="1.9" fill="#f4f4f4"/></svg>
<svg class="b" style="left:262.5px;top:277.6px;" width="12" height="8" viewBox="0 0 12 8" preserveAspectRatio="none"><path d="M0.9 1.3L5.6 5.9L10.3 1.3" fill="none" stroke="#a4a4a4" stroke-width="1.1" stroke-linecap="round" stroke-linejoin="round"/></svg>
<svg class="b" style="left:262.5px;top:528.6px;" width="12" height="8" viewBox="0 0 12 8" preserveAspectRatio="none"><path d="M0.9 1.3L5.6 5.9L10.3 1.3" fill="none" stroke="#a4a4a4" stroke-width="1.1" stroke-linecap="round" stroke-linejoin="round"/></svg>
<svg class="b" style="left:303px;top:300px;" width="34" height="44" viewBox="0 0 34 44" preserveAspectRatio="none"><path d="M0.5 0.5H23.3L33.5 10.7V43.5H0.5Z" fill="#fbfbfb" stroke="#8a8882" stroke-width="0.9"/><path d="M23.3 0.5V10.7H33.5Z" fill="#f8f8f8" stroke="#77756f" stroke-width="0.9" stroke-linejoin="round"/></svg>
<span class="t" style="left:349px;top:164px;font-size:11.8px;color:#fff;letter-spacing:0.078px;">Downloads</span>
<span class="t" style="left:349px;top:220px;font-size:11.8px;color:#fff;letter-spacing:0.028px;">Videos</span>
<span class="t" style="left:603px;top:164px;font-size:11.8px;color:#fff;letter-spacing:0.547px;">Musik</span>
<span class="t" style="left:603px;top:220px;font-size:11.8px;color:#fff;letter-spacing:-0.047px;">Desktop</span>
<span class="t" style="left:278px;top:270.6px;font-size:15.6px;color:#fff;letter-spacing:-0.543px;">Geräte und Laufwerke</span>
<span class="t" style="left:278px;top:521.6px;font-size:15.6px;color:#fff;letter-spacing:-0.609px;">Netzwerkadressen</span>
<span class="t" style="left:349px;top:304px;font-size:11.8px;color:#fff;letter-spacing:0.054px;">SmartConnect</span>
<span class="t" style="left:349px;top:320px;font-size:11.8px;color:#d6d6d6;letter-spacing:-0.161px;">ShareHub</span>
<svg class="b" style="left:553px;top:312px;overflow:visible;" width="42" height="23" viewBox="0 0 42 23" preserveAspectRatio="none"><path d="M9 0H33.4L41.4 8.6H0.6Z" fill="url(#dtop)"/><rect x="0.5" y="8.6" width="41" height="13" rx="1.6" fill="url(#dface)" stroke="#c4c4c4" stroke-width="1.2"/><circle cx="7" cy="15.2" r="1.7" fill="url(#led)"/></svg>
<span class="t" style="left:603px;top:296px;font-size:11.8px;color:#fff;letter-spacing:-0.497px;">OS (C:)</span>
<div class="b " style="left:602px;top:315px;width:168px;height:13px;background:#e6e6e6;border:1px solid #bcbcbc"></div>
<div class="b " style="left:603px;top:316px;width:65px;height:11px;background:#0070cb;"></div>
<span class="t" style="left:603px;top:327px;font-size:11.8px;color:#d6d6d6;letter-spacing:-0.345px;">582 GB frei von 956 GB</span>
<svg class="b" style="left:299px;top:368px;overflow:visible;" width="42" height="23" viewBox="0 0 42 23" preserveAspectRatio="none"><path d="M9 0H33.4L41.4 8.6H0.6Z" fill="url(#dtop)"/><rect x="0.5" y="8.6" width="41" height="13" rx="1.6" fill="url(#dface)" stroke="#c4c4c4" stroke-width="1.2"/><circle cx="7" cy="15.2" r="1.7" fill="url(#led)"/></svg>
<span class="t" style="left:349px;top:352px;font-size:11.8px;color:#fff;letter-spacing:-0.232px;">Data (D:)</span>
<div class="b " style="left:348px;top:371px;width:168px;height:13px;background:#e6e6e6;border:1px solid #bcbcbc"></div>
<div class="b " style="left:349px;top:372px;width:15px;height:11px;background:#0070cb;"></div>
<span class="t" style="left:349px;top:383px;font-size:11.8px;color:#d6d6d6;letter-spacing:-0.345px;">224 GB frei von 247 GB</span>
<svg class="b" style="left:553px;top:368px;overflow:visible;" width="42" height="23" viewBox="0 0 42 23" preserveAspectRatio="none"><path d="M9 0H33.4L41.4 8.6H0.6Z" fill="url(#dtop)"/><rect x="0.5" y="8.6" width="41" height="13" rx="1.6" fill="url(#dface)" stroke="#c4c4c4" stroke-width="1.2"/><circle cx="7" cy="15.2" r="1.7" fill="url(#led)"/></svg>
<span class="t" style="left:603px;top:352px;font-size:11.8px;color:#fff;letter-spacing:-0.474px;">1 TB  (E:)</span>
<div class="b " style="left:602px;top:371px;width:168px;height:13px;background:#e6e6e6;border:1px solid #bcbcbc"></div>
<div class="b " style="left:603px;top:372px;width:92px;height:11px;background:#0070cb;"></div>
<span class="t" style="left:603px;top:383px;font-size:11.8px;color:#d6d6d6;letter-spacing:-0.345px;">265 GB frei von 596 GB</span>
<svg class="b" style="left:299px;top:424px;overflow:visible;" width="42" height="23" viewBox="0 0 42 23" preserveAspectRatio="none"><path d="M9 0H33.4L41.4 8.6H0.6Z" fill="url(#dtop)"/><rect x="0.5" y="8.6" width="41" height="13" rx="1.6" fill="url(#dface)" stroke="#c4c4c4" stroke-width="1.2"/><circle cx="7" cy="15.2" r="1.7" fill="url(#led)"/></svg>
<span class="t" style="left:349px;top:408px;font-size:11.8px;color:#fff;letter-spacing:-0.197px;">Backup (F:)</span>
<div class="b " style="left:348px;top:427px;width:168px;height:13px;background:#e6e6e6;border:1px solid #bcbcbc"></div>
<div class="b " style="left:349px;top:428px;width:16px;height:11px;background:#0070cb;"></div>
<span class="t" style="left:349px;top:439px;font-size:11.8px;color:#d6d6d6;letter-spacing:-0.345px;">301 GB frei von 334 GB</span>
<svg class="b" style="left:553px;top:424px;overflow:visible;" width="42" height="23" viewBox="0 0 42 23" preserveAspectRatio="none"><path d="M9 0H33.4L41.4 8.6H0.6Z" fill="url(#dtop)"/><rect x="0.5" y="8.6" width="41" height="13" rx="1.6" fill="url(#dface)" stroke="#c4c4c4" stroke-width="1.2"/><circle cx="7" cy="15.2" r="1.7" fill="url(#led)"/></svg>
<span class="t" style="left:603px;top:408px;font-size:11.8px;color:#fff;letter-spacing:-0.044px;">Flight (G:)</span>
<div class="b " style="left:602px;top:427px;width:168px;height:13px;background:#e6e6e6;border:1px solid #bcbcbc"></div>
<div class="b " style="left:603px;top:428px;width:123px;height:11px;background:#0070cb;"></div>
<span class="t" style="left:603px;top:439px;font-size:11.8px;color:#d6d6d6;letter-spacing:-0.304px;">112 GB frei von 430 GB</span>
<svg class="b" style="left:299px;top:480px;overflow:visible;" width="42" height="23" viewBox="0 0 42 23" preserveAspectRatio="none"><path d="M9 0H33.4L41.4 8.6H0.6Z" fill="url(#dtop)"/><rect x="0.5" y="8.6" width="41" height="13" rx="1.6" fill="url(#dface)" stroke="#c4c4c4" stroke-width="1.2"/><circle cx="7" cy="15.2" r="1.7" fill="url(#led)"/></svg>
<span class="t" style="left:349px;top:464px;font-size:11.8px;color:#fff;letter-spacing:-0.349px;">Envato_SIC (H:)</span>
<div class="b " style="left:348px;top:483px;width:168px;height:13px;background:#e6e6e6;border:1px solid #bcbcbc"></div>
<div class="b " style="left:349px;top:484px;width:86px;height:11px;background:#0070cb;"></div>
<span class="t" style="left:349px;top:495px;font-size:11.8px;color:#d6d6d6;letter-spacing:-0.304px;">114 GB frei von 237 GB</span>
<svg class="b" style="left:553px;top:480px;overflow:visible;" width="42" height="23" viewBox="0 0 42 23" preserveAspectRatio="none"><path d="M9 0H33.4L41.4 8.6H0.6Z" fill="url(#dtop)"/><rect x="0.5" y="8.6" width="41" height="13" rx="1.6" fill="url(#dface)" stroke="#c4c4c4" stroke-width="1.2"/><circle cx="7" cy="15.2" r="1.7" fill="url(#led)"/></svg>
<span class="t" style="left:603px;top:464px;font-size:11.8px;color:#fff;letter-spacing:-0.314px;">Recovery (R:)</span>
<div class="b " style="left:602px;top:483px;width:168px;height:13px;background:#e6e6e6;border:1px solid #bcbcbc"></div>
<div class="b " style="left:603px;top:484px;width:94px;height:11px;background:#0070cb;"></div>
<span class="t" style="left:603px;top:495px;font-size:11.8px;color:#d6d6d6;letter-spacing:-0.340px;">8,72 GB frei von 20,1 GB</span>
<svg class="b" style="left:299px;top:563px;overflow:visible;" width="42" height="31" viewBox="0 0 42 31" preserveAspectRatio="none"><path d="M9.6 0H32.8L41.2 9H0.8Z" fill="url(#dtop)"/><rect x="0.7" y="9" width="40.6" height="11.6" rx="1.4" fill="url(#dface)" stroke="#c4c4c4" stroke-width="1.2"/><circle cx="7" cy="14.6" r="1.6" fill="url(#led)"/><rect x="0" y="22.6" width="42" height="7" rx="1.2" fill="url(#pipe)"/><rect x="6" y="21.4" width="30.2" height="9.4" rx="1" fill="url(#grn)"/><rect x="8.4" y="21.4" width="0.8" height="9.4" fill="#2aa84a" opacity="0.6"/><rect x="33" y="21.4" width="0.8" height="9.4" fill="#2aa84a" opacity="0.6"/></svg>
<span class="t" style="left:349px;top:547px;font-size:11.8px;color:#fff;letter-spacing:-0.143px;">music (\\DISCSTATION224) (X:)</span>
<div class="b " style="left:348px;top:566px;width:168px;height:13px;background:#e6e6e6;border:1px solid #bcbcbc"></div>
<div class="b " style="left:349px;top:567px;width:76px;height:11px;background:#0070cb;"></div>
<span class="t" style="left:349px;top:578px;font-size:11.8px;color:#d6d6d6;letter-spacing:-0.289px;">969 GB frei von 1,74 TB</span>
<svg class="b" style="left:553px;top:563px;overflow:visible;" width="42" height="31" viewBox="0 0 42 31" preserveAspectRatio="none"><path d="M9.6 0H32.8L41.2 9H0.8Z" fill="url(#dtop)"/><rect x="0.7" y="9" width="40.6" height="11.6" rx="1.4" fill="url(#dface)" stroke="#c4c4c4" stroke-width="1.2"/><circle cx="7" cy="14.6" r="1.6" fill="url(#led)"/><rect x="0" y="22.6" width="42" height="7" rx="1.2" fill="url(#pipe)"/><rect x="6" y="21.4" width="30.2" height="9.4" rx="1" fill="url(#grn)"/><rect x="8.4" y="21.4" width="0.8" height="9.4" fill="#2aa84a" opacity="0.6"/><rect x="33" y="21.4" width="0.8" height="9.4" fill="#2aa84a" opacity="0.6"/></svg>
<svg class="b" style="left:552px;top:300px;" width="17" height="17" viewBox="0 0 17 17" preserveAspectRatio="none"><rect x="0" y="0" width="8" height="8" fill="url(#win)"/><rect x="0" y="9" width="8" height="8" fill="url(#win)"/><rect x="9" y="0" width="8" height="8" fill="url(#win)"/><rect x="9" y="9" width="8" height="8" fill="url(#win)"/></svg>
<span class="t" style="left:603px;top:548px;font-size:11.8px;color:#fff;letter-spacing:-0.127px;">Volume1 (\\192.168.178.115)</span>
<span class="t" style="left:603px;top:563px;font-size:11.8px;color:#fff;letter-spacing:-0.120px;">(Y:)</span>
<div class="b " style="left:602px;top:582px;width:168px;height:13px;background:#e6e6e6;border:1px solid #bcbcbc"></div>
<div class="b " style="left:603px;top:583px;width:76px;height:11px;background:#0070cb;"></div>
<svg class="b" style="left:299px;top:619px;overflow:visible;" width="42" height="31" viewBox="0 0 42 31" preserveAspectRatio="none"><path d="M9.6 0H32.8L41.2 9H0.8Z" fill="url(#dtop)"/><rect x="0.7" y="9" width="40.6" height="11.6" rx="1.4" fill="url(#dface)" stroke="#c4c4c4" stroke-width="1.2"/><circle cx="7" cy="14.6" r="1.6" fill="url(#led)"/><rect x="0" y="22.6" width="42" height="7" rx="1.2" fill="url(#pipe)"/><rect x="6" y="21.4" width="30.2" height="9.4" rx="1" fill="url(#grn)"/><rect x="8.4" y="21.4" width="0.8" height="9.4" fill="#2aa84a" opacity="0.6"/><rect x="33" y="21.4" width="0.8" height="9.4" fill="#2aa84a" opacity="0.6"/></svg>
<span class="t" style="left:349px;top:604px;font-size:11.8px;color:#fff;letter-spacing:-0.424px;">CAMSTICK</span>
<span class="t" style="left:349px;top:619px;font-size:11.8px;color:#fff;letter-spacing:-0.040px;">(\\192.168.178.1\Klingel) (Z:)</span>
<div class="b " style="left:348px;top:638px;width:168px;height:13px;background:#e6e6e6;border:1px solid #bcbcbc"></div>
<div class="b " style="left:349px;top:639px;width:2px;height:11px;background:#0070cb;"></div>
<div class="b " style="left:836px;top:135px;width:275px;height:522px;background:#202020;"></div>
<div class="b " style="left:835px;top:135px;width:1px;height:522px;background:#2b2b2b;"></div>
<span class="t" style="left:861px;top:387px;font-size:11.8px;color:#fff;letter-spacing:-0.139px;">Wählen Sie eine Datei für die Vorschau aus.</span>
<div class="b " style="left:0px;top:658px;width:1111px;height:24px;background:#1c1c1c;"></div>
<span class="t" style="left:14px;top:660px;font-size:11.8px;color:#fff;letter-spacing:-0.225px;">17 Elemente</span>
<div class="b " style="left:88px;top:664px;width:1px;height:12px;background:#e0e0e0;"></div>
<svg class="b" style="left:1063px;top:662px;" width="16" height="16" viewBox="0 0 16 16" preserveAspectRatio="none"><rect x="0" y="0" width="16" height="16" rx="2" fill="#c6c6c6"/><rect x="2.4" y="3" width="11.2" height="1.1" fill="#000"/><rect x="2.4" y="6" width="11.2" height="1.1" fill="#000"/><rect x="2.4" y="9" width="11.2" height="1.1" fill="#000"/><rect x="2.4" y="12" width="11.2" height="1.1" fill="#000"/></svg>
<svg class="b" style="left:1087px;top:662px;" width="16" height="16" viewBox="0 0 16 16" preserveAspectRatio="none"><rect x="0" y="0" width="16" height="16" rx="2" fill="#c6c6c6"/><rect x="2.4" y="2.4" width="11.2" height="9" fill="#fff" stroke="#000" stroke-width="1"/><rect x="2.4" y="13" width="11.2" height="1" fill="#000"/></svg>
<div class="b " style="left:0px;top:682px;width:1111px;height:23px;background:#f0f0f0;"></div>
<span class="t" style="left:3px;top:684.5px;font-size:11.8px;color:#000;letter-spacing:-0.325px;">17 Elemente</span>
<div class="b " style="left:823px;top:684px;width:1px;height:21px;background:#d0d0d0;"></div>
<div class="b " style="left:911px;top:684px;width:1px;height:21px;background:#d0d0d0;"></div>
<svg class="b" style="left:916px;top:687px;" width="17" height="16" viewBox="0 0 17 16" preserveAspectRatio="none"><rect x="0.2" y="0.2" width="16.4" height="12.4" rx="0.8" fill="#2a6f9a"/><rect x="0.9" y="0.9" width="15" height="11" fill="url(#scr)"/><rect x="7.4" y="12.6" width="2" height="2.2" fill="#8a9aaa"/><rect x="4.4" y="14.4" width="8" height="1.1" rx="0.4" fill="#94a4b4"/></svg>
<span class="t" style="left:936px;top:684.5px;font-size:11.8px;color:#000;letter-spacing:0.315px;">Computer</span>
<svg class="b" style="left:1101px;top:695px;" width="8" height="8" viewBox="0 0 8 8" preserveAspectRatio="none"><rect x="6" y="0" width="1.6" height="1.6" fill="#b8b8b8"/><rect x="3" y="3" width="1.6" height="1.6" fill="#b8b8b8"/><rect x="6" y="3" width="1.6" height="1.6" fill="#b8b8b8"/><rect x="0" y="6" width="1.6" height="1.6" fill="#b8b8b8"/><rect x="3" y="6" width="1.6" height="1.6" fill="#b8b8b8"/><rect x="6" y="6" width="1.6" height="1.6" fill="#b8b8b8"/></svg>
</div>
<div class="b " style="left:1111px;top:6px;width:1px;height:692px;background:#4a4a4a;opacity:0.8"></div>
</body></html>
